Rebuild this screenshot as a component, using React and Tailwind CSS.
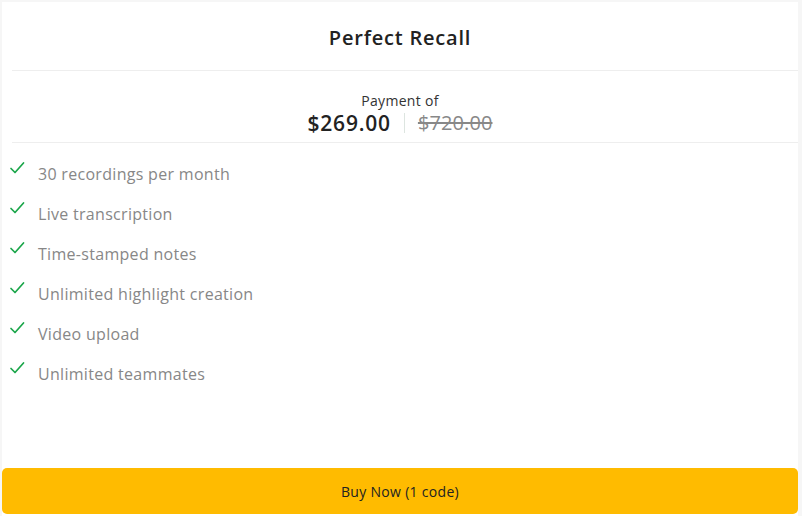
import React from "react";

const features = [
  "30 recordings per month",
  "Live transcription",
  "Time-stamped notes",
  "Unlimited highlight creation",
  "Video upload",
  "Unlimited teammates",
];

const Check = () => (
  <svg width="16" height="16" viewBox="0 0 16 16" fill="none" className="shrink-0">
    <path d="M2 8.5l4 4L14.5 3" stroke="#1aa64a" strokeWidth="1.7" strokeLinecap="round" strokeLinejoin="round" />
  </svg>
);

export default function App() {
  return (
    <div className="min-h-[516px] bg-[#f6f6f6] pl-[2px] pr-[4px] pt-[2px] font-['Open_Sans',sans-serif]">
      <div className="flex h-[514px] flex-col bg-white">
        <div className="flex h-[68px] items-center justify-center pt-[3px]">
          <h1 className="text-[20px] font-semibold tracking-[0.8px] text-[#222]">Perfect Recall</h1>
        </div>
        <div className="ml-[10px] border-t border-[#eeeeee]" />
        <div className="flex h-[71px] flex-col items-center justify-center pt-[14px]">
          <span className="text-[14px] leading-[18px] tracking-[0.3px] text-[#333]">Payment of</span>
          <div className="flex items-center leading-[26px]">
            <span className="text-[21px] font-semibold tracking-[0.8px] text-[#222]">$269.00</span>
            <span className="mx-[13px] h-[20px] border-l border-[#dde5e0]" />
            <span className="text-[20px] tracking-[0.1px] text-[#888] line-through">$720.00</span>
          </div>
        </div>
        <div className="ml-[10px] border-t border-[#eeeeee]" />
        <ul className="flex flex-col pt-[19px]">
          {features.map((f) => (
            <li key={f} className="flex h-[40px] items-start gap-[13px] pl-[7px]">
              <span className="-mt-[2px]"><Check /></span>
              <span className="text-[16px] font-medium leading-[24px] tracking-[0.3px] text-[#878787]">{f}</span>
            </li>
          ))}
        </ul>
        <div className="mt-auto mb-[2px] flex h-[46px] items-center justify-center rounded-[5px] bg-[#ffbb00]">
          <span className="text-[14px] font-medium tracking-[0.3px] text-[#222]">Buy Now (1 code)</span>
        </div>
      </div>
    </div>
  );
}
